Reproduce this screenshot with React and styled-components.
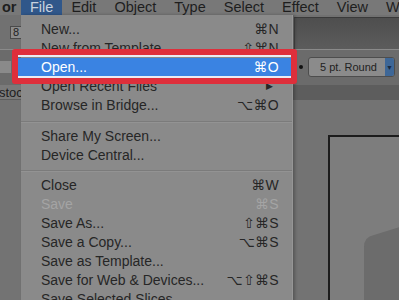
import React from "react";
import styled, { createGlobalStyle } from "styled-components";

const GlobalStyle = createGlobalStyle`
  html, body {
    margin: 0;
    padding: 0;
    background: #737373;
  }
  body {
    font-family: "Liberation Sans", Arial, sans-serif;
  }
`;

const Screen = styled.div`
  width: 399px;
  height: 300px;
  overflow: hidden;
  display: flex;
  flex-direction: column;
  background: #737373;
`;

/* top menu bar */
const MenuBar = styled.div`
  height: 15px;
  flex: none;
  display: flex;
  align-items: flex-start;
  background: #787878;
  font-size: 14.5px;
  line-height: 14px;
  color: #1e1e1e;
  white-space: nowrap;
  overflow: hidden;
`;

const AppName = styled.span`
  flex: none;
  font-weight: bold;
  width: 19px;
  padding-left: 2px;
  overflow: hidden;
`;

const MenuTitle = styled.span`
  flex: none;
  height: 15px;
  padding: 0 9px;
  background: ${(p) => (p.$active ? "#30578a" : "transparent")};
  color: ${(p) => (p.$active ? "#c9d2de" : "#1e1e1e")};
`;

/* workspace behind the menu */
const Workspace = styled.div`
  position: relative;
  flex: 1;
  display: flex;
  flex-direction: column;
`;

const ControlRow = styled.div`
  height: ${(p) => p.$h}px;
  flex: none;
  display: flex;
  align-items: ${(p) => p.$align || "center"};
  background: ${(p) => p.$bg};
  border-bottom: 1px solid ${(p) => p.$line || "transparent"};
  box-sizing: border-box;
`;

const SizeField = styled.div`
  margin-left: 10px;
  width: 14px;
  height: 13px;
  box-sizing: border-box;
  border: 1px solid #4a4a4a;
  background: #8c8c8c;
  font-size: 11px;
  line-height: 11px;
  padding-left: 2px;
  color: #222;
`;

const LeftPatch = styled.div`
  width: 11px;
  height: 12px;
  background: #8a8a8a;
`;

const Spacer = styled.div`
  flex: 1;
`;

const Recess = styled.div`
  align-self: stretch;
  margin: 2px 0 0 0;
  width: 105px;
  background: linear-gradient(#4e4e4e, #5c5c5c);
  border-top: 1px solid #3a3a3a;
  border-left: 1px solid #444;
  box-sizing: border-box;
`;

const Bullet = styled.span`
  width: 4px;
  height: 4px;
  border-radius: 50%;
  background: #111;
  margin-right: 5px;
`;

const StrokeSelect = styled.div`
  width: 87px;
  height: 20px;
  margin-right: 4px;
  box-sizing: border-box;
  border: 1px solid #4d4d4d;
  border-radius: 3px;
  background: #8b8b8b;
  display: flex;
  align-items: center;
  font-size: 11px;
  color: #222;
  overflow: hidden;
`;

const SelectLabel = styled.span`
  flex: 1;
  padding-left: 11px;
`;

const SelectArrow = styled.span`
  width: 9px;
  align-self: stretch;
  background: #3e6797;
  display: flex;
  align-items: center;
  justify-content: center;
  font-size: 7px;
  color: #1a2a40;
`;

const Tab = styled.div`
  width: 40px;
  align-self: stretch;
  background: #7a7a7a;
  font-size: 13px;
  line-height: 15px;
  color: #202020;
  text-indent: -1px;
  overflow: hidden;
`;

const Canvas = styled.div`
  flex: 1;
  display: flex;
  padding: 35px 0 0 328px;
  background: #737373;
`;

const Artboard = styled.div`
  flex: 1;
  border-top: 2px solid #1c1c1c;
  border-left: 2px solid #1c1c1c;
  background: #7d7d7d;
`;

/* dropdown menu */
const Menu = styled.div`
  position: absolute;
  left: 21px;
  top: 0;
  width: 271px;
  padding-top: 5px;
  background: #8a8a8a;
  border-right: 1px solid #969696;
  box-shadow: 2px 0 3px rgba(0, 0, 0, 0.25);
  font-size: 14px;
  color: #262626;
`;

const Item = styled.div`
  height: 19px;
  line-height: 19px;
  display: flex;
  padding: 0 13px 0 20px;
  white-space: nowrap;
  color: ${(p) => (p.$active ? "#ffffff" : p.$disabled ? "#a4a4a4" : "#262626")};
  background: ${(p) => (p.$active ? "#3a83e2" : "transparent")};
  box-shadow: ${(p) => (p.$active ? "-3px 0 0 #3a83e2" : "none")};
`;

const Label = styled.span`
  flex: 1;
`;

const Keys = styled.span`
  font-family: "Liberation Sans", "DejaVu Sans", sans-serif;
  letter-spacing: 0.3px;
`;

const Submenu = styled.span`
  font-size: 9px;
  padding-right: 6px;
`;

const Separator = styled.div`
  height: 1px;
  margin: ${(p) => p.$m || "5px 0 6px"};
  background: #7b7b7b;
  border-bottom: 1px solid #939393;
`;

/* red callout around the Open row */
const Callout = styled.div`
  position: absolute;
  left: 12px;
  top: 34px;
  width: 285px;
  height: 35px;
  box-sizing: border-box;
  border: 6px solid #de2f3b;
  border-radius: 3px;
  box-shadow: inset 0 2px 0 #e9ecf2, inset 0 -2px 0 #e9ecf2;
  pointer-events: none;
`;

const titles = ["Edit", "Object", "Type", "Select", "Effect", "View", "W"];

const groups = [
  [
    { label: "New...", keys: "⌘N" },
    { label: "New from Template...", keys: "⇧⌘N" },
    { label: "Open...", keys: "⌘O", active: true },
    { label: "Open Recent Files", sub: true },
    { label: "Browse in Bridge...", keys: "⌥⌘O" },
  ],
  [
    { label: "Share My Screen..." },
    { label: "Device Central..." },
  ],
  [
    { label: "Close", keys: "⌘W" },
    { label: "Save", keys: "⌘S", disabled: true },
    { label: "Save As...", keys: "⇧⌘S" },
    { label: "Save a Copy...", keys: "⌥⌘S" },
    { label: "Save as Template..." },
    { label: "Save for Web & Devices...", keys: "⌥⇧⌘S" },
    { label: "Save Selected Slices..." },
  ],
];

const App = () => {
  return (
    <Screen>
      <GlobalStyle />
      <MenuBar>
        <AppName>or</AppName>
        <MenuTitle $active>File</MenuTitle>
        {titles.map((t) => (
          <MenuTitle key={t}>{t}</MenuTitle>
        ))}
      </MenuBar>

      <Workspace>
        <ControlRow $h={35} $bg="#717171" $line="#8a8a8a">
          <SizeField>8</SizeField>
          <Spacer />
          <Recess />
        </ControlRow>
        <ControlRow $h={35} $bg="#6b6b6b">
          <LeftPatch />
          <Spacer />
          <Bullet />
          <StrokeSelect>
            <SelectLabel>5 pt. Round</SelectLabel>
            <SelectArrow>▼</SelectArrow>
          </StrokeSelect>
        </ControlRow>
        <ControlRow $h={15} $bg="#5d5d5d" $align="stretch">
          <Tab>stock</Tab>
        </ControlRow>
        <Canvas>
          <Artboard>
            <svg width="70" height="170" viewBox="0 0 70 170">
              <path
                d="M34 110 Q34 100 44 98 L70 90 L70 170 L34 170 Z"
                fill="#6c6c6c"
              />
            </svg>
          </Artboard>
        </Canvas>

        <Menu>
          {groups.map((group, gi) => (
            <React.Fragment key={gi}>
              {gi > 0 && <Separator $m={gi === 1 ? "6px 0 4px" : "5px 0 4px"} />}
              {group.map((it) => (
                <Item key={it.label} $active={it.active} $disabled={it.disabled}>
                  <Label>{it.label}</Label>
                  {it.keys && <Keys>{it.keys}</Keys>}
                  {it.sub && <Submenu>▶</Submenu>}
                </Item>
              ))}
            </React.Fragment>
          ))}
        </Menu>
        <Callout />
      </Workspace>
    </Screen>
  );
};

export default App;
